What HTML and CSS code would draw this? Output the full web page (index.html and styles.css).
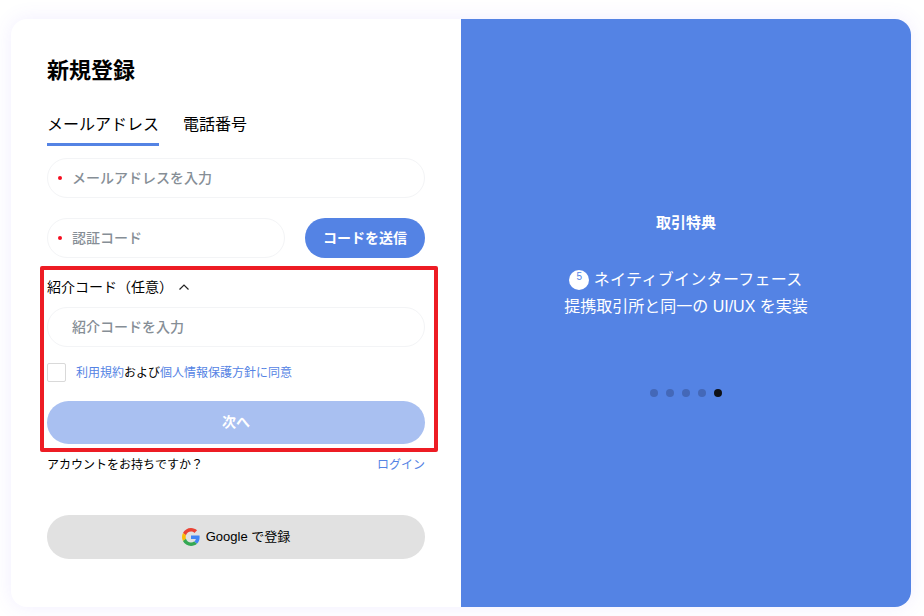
FILE: index.html
```html
<!DOCTYPE html>
<html lang="ja">
<head>
    <meta charset="UTF-8">
    <meta name="viewport" content="width=device-width, initial-scale=1.0">
    <title>新規登録</title>
    <link rel="stylesheet" href="styles.css">
</head>
<body>
    <div class="card">
        <section class="form-panel">
            <h1 class="form-title">新規登録</h1>

            <div class="tabs">
                <button class="tab active">メールアドレス</button>
                <button class="tab">電話番号</button>
            </div>

            <div class="field required">
                <span class="field-dot"></span>
                <span class="field-text">メールアドレスを入力</span>
            </div>

            <div class="code-row">
                <div class="field required">
                    <span class="field-dot"></span>
                    <span class="field-text">認証コード</span>
                </div>
                <button class="send-button">コードを送信</button>
            </div>

            <div class="referral-toggle">
                <span>紹介コード（任意）</span>
                <svg class="chevron" viewBox="0 0 12 8" fill="none" stroke="currentColor">
                    <path d="M1.5 6.5L6 2l4.500 4.500" stroke-width="1.200"/>
                </svg>
            </div>

            <div class="field referral-field">
                <span class="field-text">紹介コードを入力</span>
            </div>

            <label class="agree">
                <span class="checkbox"></span>
                <span class="agree-text"><a class="link">利用規約</a>および<a class="link">個人情報保護方針に同意</a></span>
            </label>

            <button class="next-button">次へ</button>

            <div class="login-row">
                <span>アカウントをお持ちですか？</span>
                <a class="link">ログイン</a>
            </div>

            <button class="google-button">
                <svg class="google-icon" viewBox="0 0 48 48">
                    <path fill="#EA4335" d="M24 9.500c3.540 0 6.710 1.220 9.210 3.600l6.850-6.850C35.900 2.380 30.470 0 24 0 14.620 0 6.510 5.380 2.560 13.220l7.980 6.190C12.430 13.720 17.740 9.500 24 9.500z"/>
                    <path fill="#4285F4" d="M46.980 24.550c0-1.570-.15-3.090-.38-4.550H24v9.020h12.940c-.58 2.960-2.260 5.480-4.780 7.180l7.730 6c4.510-4.180 7.090-10.360 7.090-17.650z"/>
                    <path fill="#FBBC05" d="M10.530 28.590c-.48-1.450-.76-2.990-.76-4.590s.27-3.140.76-4.590l-7.980-6.190C.92 16.460 0 20.120 0 24c0 3.880.92 7.540 2.560 10.780l7.970-6.190z"/>
                    <path fill="#34A853" d="M24 48c6.480 0 11.930-2.130 15.890-5.810l-7.730-6c-2.150 1.450-4.920 2.300-8.160 2.300-6.260 0-11.570-4.220-13.470-9.910l-7.980 6.190C6.510 42.620 14.620 48 24 48z"/>
                </svg>
                <span class="google-label">Google で登録</span>
            </button>
        </section>

        <section class="promo-panel">
            <h2 class="promo-title">取引特典</h2>
            <p class="promo-text">
                <span class="promo-num">5</span> <span class="promo-kana">ネイティブインターフェース</span><br>
                提携取引所と同一の UI/UX を実装
            </p>
            <div class="dots">
                <span class="dot"></span>
                <span class="dot"></span>
                <span class="dot"></span>
                <span class="dot"></span>
                <span class="dot current"></span>
            </div>
        </section>

        <!-- annotation box drawn over the form -->
        <div class="highlight-box"></div>
    </div>
</body>
</html>
```

FILE: styles.css
```css
* {
    margin: 0;
    padding: 0;
    box-sizing: border-box;
}

body {
    font-family: "Liberation Sans", "Noto Sans CJK JP", sans-serif;
    background: #FFFFFF;
    color: #000000;
    width: 924px;
    height: 616px;
    padding: 19px 13px 9px 11px;
    overflow: hidden;
}

button {
    font-family: inherit;
    border: none;
    cursor: pointer;
}

.card {
    display: flex;
    width: 900px;
    height: 588px;
    background: #FFFFFF;
    border-radius: 16px;
    box-shadow: 0 0 20px rgba(120, 90, 255, 0.1);
    position: relative;
}

.form-panel {
    width: 450px;
    padding: 37px 36px 0;
    display: flex;
    flex-direction: column;
}

.form-title {
    font-size: 22px;
    font-weight: 700;
    line-height: 30px;
    margin-bottom: 26px;
}

.tabs {
    display: flex;
    gap: 24px;
    margin-bottom: 12px;
}

.tab {
    background: none;
    font-size: 16px;
    line-height: 24px;
    height: 34px;
    padding-bottom: 6px;
    color: #000000;
    border-bottom: 3px solid transparent;
}

.tab.active {
    border-bottom-color: #5483E4;
}

.field {
    height: 40px;
    border: 1px solid #F3F4F6;
    border-radius: 20px;
    padding-left: 10px;
    display: flex;
    align-items: center;
    font-size: 14px;
}

.field-dot {
    width: 4px;
    height: 4px;
    border-radius: 50%;
    background: #F50D1F;
    margin-right: 10px;
}

.field-text {
    color: #868E96;
    font-weight: 500;
    margin-bottom: 3px;
}

.code-row {
    display: flex;
    gap: 20px;
    margin-top: 20px;
}

.code-row .field {
    flex: 1;
}

.send-button {
    width: 120px;
    height: 40px;
    padding-bottom: 2px;
    border-radius: 20px;
    background: #5483E4;
    color: #FFFFFF;
    font-size: 14px;
    font-weight: 700;
}

.referral-toggle {
    display: flex;
    align-items: center;
    gap: 5px;
    font-size: 14px;
    line-height: 20px;
    margin-top: 19px;
}

.chevron {
    width: 12px;
    height: 8px;
    color: #222222;
}

.referral-field {
    margin-top: 10px;
    padding-left: 24px;
}

.agree {
    display: flex;
    align-items: center;
    gap: 10px;
    height: 19px;
    margin-top: 16px;
    font-size: 12px;
}

.checkbox {
    width: 19px;
    height: 19px;
    border: 1px solid #D9D9D9;
    border-radius: 2px;
}

.agree-text {
    margin-bottom: 3px;
}

.link {
    color: #5483E4;
}

.next-button {
    height: 43px;
    margin-top: 19px;
    padding-bottom: 3px;
    border-radius: 22px;
    background: #A9C0F1;
    color: #FFFFFF;
    font-size: 14px;
    font-weight: 700;
}

.login-row {
    display: flex;
    justify-content: space-between;
    font-size: 12px;
    line-height: 16px;
    margin-top: 13px;
}

.google-button {
    height: 44px;
    margin-top: 42px;
    border-radius: 22px;
    background: #E1E1E1;
    color: #000000;
    font-size: 13px;
    display: flex;
    align-items: center;
    justify-content: center;
    gap: 6px;
}

.google-icon {
    width: 18px;
    height: 18px;
}

.google-label {
    margin-bottom: 3px;
}

.promo-panel {
    width: 450px;
    background: #5483E4;
    border-radius: 0 16px 16px 0;
    color: #FFFFFF;
    text-align: center;
    padding-top: 194px;
}

.promo-title {
    font-size: 15px;
    font-weight: 700;
    line-height: 20px;
}

.promo-text {
    font-size: 16px;
    line-height: 27px;
    margin-top: 33px;
}

.promo-kana {
    letter-spacing: 0.3px;
}

.promo-num {
    display: inline-block;
    width: 20px;
    height: 20px;
    border-radius: 50%;
    background: #FFFFFF;
    color: #5483E4;
    font-size: 10px;
    line-height: 14px;
    vertical-align: top;
    margin-top: 4px;
}

.dots {
    display: flex;
    justify-content: center;
    gap: 8px;
    margin-top: 69px;
}

.dot {
    width: 8px;
    height: 8px;
    border-radius: 50%;
    background: #4468B8;
}

.dot.current {
    background: #0F1116;
}

.highlight-box {
    position: absolute;
    left: 29px;
    top: 247px;
    width: 398px;
    height: 186px;
    border: 4px solid #ED1C24;
    border-radius: 2px;
}
```
